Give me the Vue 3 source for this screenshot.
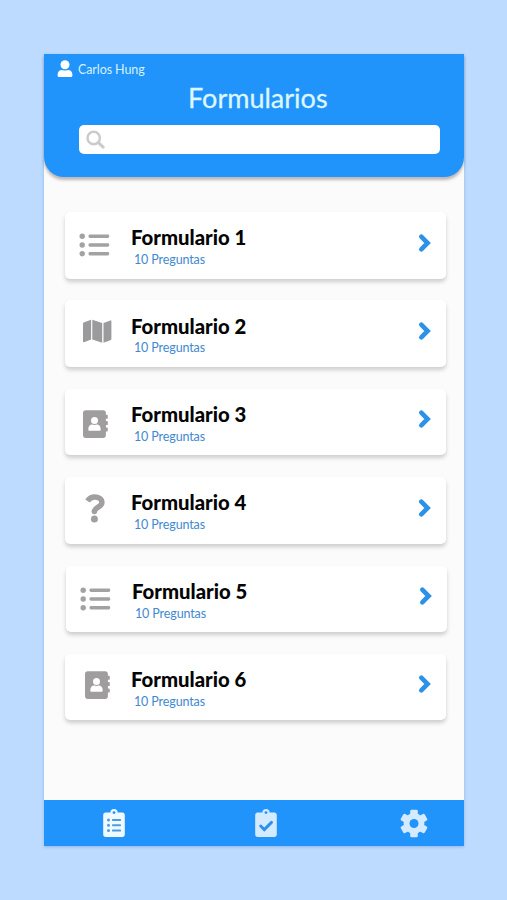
<script setup>
const forms = [
  { id: 1, icon: 'list' },
  { id: 2, icon: 'map' },
  { id: 3, icon: 'contact' },
  { id: 4, icon: 'question' },
  { id: 5, icon: 'list', shifted: true },
  { id: 6, icon: 'contact', raised: true }
]
</script>

<template>
  <div class="page">
    <main class="phone">
      <header class="header">
        <div class="user">
          <svg width="16" height="18" viewBox="0 0 16 18" fill="#fff">
            <circle cx="8" cy="4.700" r="4.500" />
            <path d="M.6 14.600C.6 11.700 2.400 10 5 10c1 .6 5 .6 6 0 2.600 0 4.400 1.700 4.400 4.600v1c0 .9-.6 1.500-1.500 1.500H2.100c-.9 0-1.500-.6-1.500-1.500z" />
          </svg>
          <span>Carlos Hung</span>
        </div>
        <h1>Formularios</h1>
        <div class="search">
          <svg width="20" height="20" viewBox="0 0 20 20" fill="none" stroke="#cbcbcb">
            <circle cx="7.700" cy="8" r="6.200" stroke-width="2.500" />
            <path d="M12.400 12.700L17.200 17.200" stroke-width="3" stroke-linecap="round" />
          </svg>
        </div>
      </header>

      <section class="list">
        <article v-for="form in forms" :key="form.id" class="card" :class="{ shifted: form.shifted }">
          <svg class="icon" :class="{ raised: form.raised }" viewBox="0 0 44 44" width="44" height="44">
            <g v-if="form.icon === 'list'" fill="#a3a1a2">
              <circle cx="7.200" cy="13.300" r="2.700" />
              <circle cx="7.200" cy="22" r="2.700" />
              <circle cx="7.200" cy="30.700" r="2.700" />
              <rect x="13.500" y="11.600" width="20.700" height="3.400" rx="1.400" />
              <rect x="13.500" y="20.300" width="20.700" height="3.400" rx="1.400" />
              <rect x="13.500" y="29" width="20.700" height="3.400" rx="1.400" />
            </g>
            <g v-else-if="form.icon === 'map'" fill="#9b9b9d">
              <path d="M8 12.800c0-.8.5-1.300 1.200-1.600l6.900-2.400v19.800l-7.100 2.600c-.6.200-1-.1-1-.7z" />
              <path d="M17.300 8.800l9.900 3.300v19.600l-9.900-3.200z" />
              <path d="M28.500 12.100l6.900-2.700c.6-.2 1 .1 1 .7v17.600c0 .8-.4 1.300-1.100 1.600l-6.800 2.400z" />
            </g>
            <g v-else-if="form.icon === 'contact'">
              <path d="M10.700 10.300h17.500c1.600 0 2.700 1.100 2.700 2.700v1.800h1c.6 0 .9.400.9.900v2.200c0 .5-.3.900-.9.900h-1v2.300h1c.6 0 .9.400.9.900v2.200c0 .5-.3.900-.9.900h-1v2.300h1c.6 0 .9.400.9.900v2.200c0 .5-.3.900-.9.900h-1v3.900c0 1.600-1.100 2.700-2.700 2.700H10.700c-1.600 0-2.700-1.100-2.700-2.700V13c0-1.600 1.100-2.700 2.700-2.700z" fill="#a09d9f" />
              <circle cx="19.500" cy="20.500" r="3.500" fill="#fff" />
              <path d="M13.300 29.200c0-3 1.600-4.700 4-4.700 1 .5 3.400.5 4.400 0 2.400 0 4 1.700 4 4.700 0 1-.4 1.500-1.200 1.500h-10c-.8 0-1.200-.5-1.200-1.500z" fill="#fff" />
            </g>
            <g v-else>
              <path d="M12.500 12.900C14.400 10 16.500 8.900 19.700 8.900c4 0 7.200 2.100 7.200 5.500 0 4.900-7.400 4.600-7.400 9.200" fill="none" stroke="#a19f9f" stroke-width="5.500" />
              <circle cx="19.400" cy="23.400" r="2.750" fill="#a19f9f" />
              <circle cx="19.400" cy="31" r="3.500" fill="#a19f9f" />
            </g>
          </svg>
          <div class="copy">
            <h2>Formulario {{ form.id }}</h2>
            <p>10 Preguntas</p>
          </div>
          <svg class="chevron" width="16" height="20" viewBox="0 0 16 20">
            <path d="M4.300 3.700L10.600 10l-6.300 6.300" fill="none" stroke="#2c91e7" stroke-width="4.600" stroke-linecap="round" />
          </svg>
        </article>
      </section>

      <nav class="nav">
        <svg width="22" height="30" viewBox="0 0 22 30">
          <path d="M2.600 4.500h4.800a3.600 3.600 0 0 1 7.200 0h4.800c1.400 0 2.400 1 2.400 2.400V26.500c0 1.400-1 2.400-2.400 2.400H2.600c-1.400 0-2.400-1-2.400-2.400V6.900c0-1.400 1-2.400 2.400-2.400z" fill="#f0f9ff" />
          <circle cx="11" cy="4.600" r="1.400" fill="#2094fb" />
          <g fill="#4b9ee2">
            <circle cx="5.500" cy="12" r="1.500" /><circle cx="5.500" cy="17.200" r="1.500" /><circle cx="5.500" cy="22.500" r="1.500" />
            <rect x="9" y="11" width="9" height="2.100" rx=".7" /><rect x="9" y="16.200" width="9" height="2.100" rx=".7" /><rect x="9" y="21.500" width="9" height="2.100" rx=".7" />
          </g>
        </svg>
        <svg width="22" height="30" viewBox="0 0 22 30">
          <path d="M2.600 4.500h4.800a3.600 3.600 0 0 1 7.200 0h4.800c1.400 0 2.400 1 2.400 2.400V26.500c0 1.400-1 2.400-2.400 2.400H2.600c-1.400 0-2.400-1-2.400-2.400V6.900c0-1.400 1-2.400 2.400-2.400z" fill="#d3eaff" />
          <circle cx="11" cy="4.600" r="1.400" fill="#2094fb" />
          <path d="M5.700 18l3.600 3.600 7.200-7.200" fill="none" stroke="#2b91ed" stroke-width="2.900" stroke-linecap="round" />
        </svg>
        <svg class="gear" width="28" height="30" viewBox="-14 -15.500 28 30">
          <g fill="#d3eaff">
            <circle r="10.400" />
            <rect v-for="angle in [0, 60, 120, 180, 240, 300]" :key="angle" x="-3.800" y="-13.800" width="7.600" height="8" rx="1.400" :transform="`rotate(${angle})`" />
          </g>
          <circle r="4.500" fill="#2094fb" />
        </svg>
      </nav>
    </main>
  </div>
</template>

<style>
body { margin: 0; background: #bddbff; }
</style>

<style scoped>
* { box-sizing: border-box; }
svg { display: block; flex: none; }
.page {
  height: 900px;
  padding: 54px 43px 54px 44px;
  background: #bddbff;
  font-family: Lato, sans-serif;
}
.phone {
  display: flex;
  flex-direction: column;
  height: 792px;
  background: #fbfbfb;
  box-shadow: 0 1px 3px rgba(50, 100, 170, .3);
}
.header {
  height: 123px;
  padding: 6px 24px 0 13px;
  background: #2094fb;
  border-radius: 0 0 20px 20px;
  box-shadow: 0 3px 3px rgba(80, 65, 60, .36);
}
.user {
  display: flex;
  align-items: center;
  gap: 5px;
  height: 18px;
  color: #d5f0ff;
  font-size: 12.500px;
  letter-spacing: -.1px;
  line-height: 18px;
}
.user span { padding-top: 2px; }
h1 {
  height: 36px;
  margin: 2px 0 0;
  padding-left: 131px;
  color: #dcf7ff;
  font-size: 27px;
  line-height: 36px;
  font-weight: 400;
  -webkit-text-stroke: .3px #dcf7ff;
}
.search {
  display: flex;
  align-items: center;
  height: 29px;
  margin: 9px 0 0 22px;
  padding-left: 7px;
  background: #fff;
  border-radius: 5px;
}
.list {
  display: flex;
  flex: 1;
  flex-direction: column;
  gap: 21.900px;
  padding: 35px 17.700px 0 21.300px;
}
.card {
  display: flex;
  align-items: flex-start;
  height: 66.500px;
  padding: 11px 13.800px 0 9.700px;
  background: #fff;
  border-radius: 5px;
  box-shadow: 0 3px 4px rgba(0, 0, 0, .18);
}
.shifted { margin: 0 -1px 0 1px; }
.raised { margin: -4.300px -1.900px 0 1.900px; }
.copy { flex: 1; padding-left: 12px; }
h2 {
  margin: 1.200px 0 0;
  color: #050505;
  font-size: 20.300px;
  line-height: 26px;
  font-weight: 900;
  white-space: nowrap;
}
p {
  margin: .8px 0 0 3px;
  color: #4289d2;
  font-size: 12.500px;
  letter-spacing: -.12px;
  line-height: 17px;
}
.chevron { margin-top: 9.500px; }
.nav {
  display: grid;
  grid-template-columns: 152px 145px 28px;
  height: 46px;
  padding: 8px 36px 0 59px;
  background: #2094fb;
}
</style>
